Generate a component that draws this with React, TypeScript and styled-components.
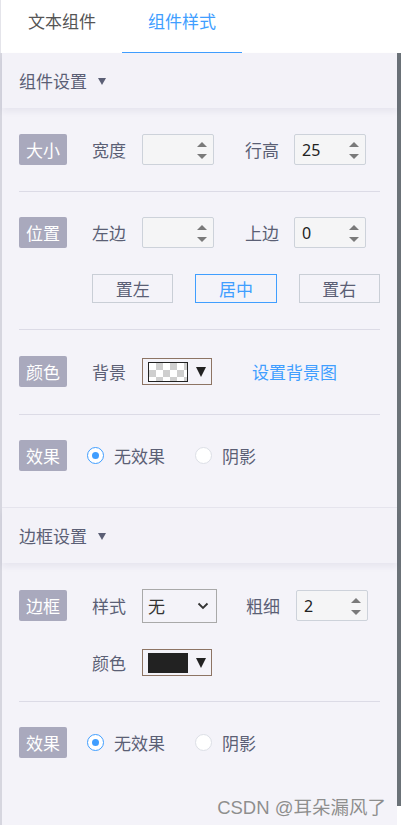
import React from "react";
import styled, { createGlobalStyle, css } from "styled-components";

const Global = createGlobalStyle`
  html, body { margin: 0; padding: 0; background: #ffffff; }
  body { font-family: "Noto Sans CJK SC", "Noto Sans", sans-serif; }
  * { box-sizing: border-box; }
`;

const FONT = `"Noto Sans CJK SC", "Noto Sans", sans-serif`;

const Page = styled.div`
  width: 401px;
  height: 825px;
  position: relative;
  overflow: hidden;
  display: flex;
  flex-direction: column;
  background: #ffffff;
  font-family: ${FONT};
`;

const Tabs = styled.div`
  height: 53px;
  display: flex;
  padding-left: 1px;
  background: #ffffff;
  border-left: 1px solid #e4e4ea;
`;

const Tab = styled.div<{ $active?: boolean }>`
  width: 120px;
  height: 53px;
  display: flex;
  align-items: center;
  justify-content: center;
  font-size: 17px;
  padding-bottom: 12px;
  color: ${(p) => (p.$active ? "#409eff" : "#555555")};
  border-bottom: 1px solid ${(p) => (p.$active ? "#409eff" : "transparent")};
`;

const Body = styled.div`
  flex: 1;
  display: flex;
  min-height: 0;
`;

const Panel = styled.div`
  flex: 1;
  background: #f4f3f9;
  border-left: 2px solid #d6d6df;
  display: flex;
  flex-direction: column;
`;

const Scrollbar = styled.div`
  width: 4px;
  height: 753px;
  background: #6b7278;
`;

const SectionHeader = styled.div`
  height: 55px;
  display: flex;
  align-items: center;
  gap: 11px;
  padding-left: 17px;
  font-size: 17px;
  color: #5b5f75;
  background: #f3f2f8;
  box-shadow: 0 4px 6px rgba(40, 40, 80, 0.06);
  position: relative;
  z-index: 1;
`;

const Caret = styled.span`
  width: 0;
  height: 0;
  border-left: 4px solid transparent;
  border-right: 4px solid transparent;
  border-top: 7px solid #5b5f75;
  margin-top: 1px;
`;

const SectionTop = styled.div`
  border-top: 1px solid #e6e5ee;
`;

const Block = styled.div<{ $last?: boolean; $padTop: number; $padBottom: number; $gap?: number }>`
  margin: 0 17px 0 17px;
  padding: ${(p) => p.$padTop}px 0 ${(p) => p.$padBottom}px;
  display: flex;
  flex-direction: column;
  gap: ${(p) => p.$gap ?? 26}px;
  ${(p) =>
    !p.$last &&
    css`
      border-bottom: 1px solid #dcdbe6;
    `}
`;

const Row = styled.div<{ $indent?: boolean }>`
  display: flex;
  align-items: center;
  height: 31px;
  ${(p) =>
    p.$indent &&
    css`
      padding-left: 73px;
    `}
`;

const Badge = styled.div`
  width: 48px;
  height: 31px;
  border-radius: 2px;
  background: #a9a9bd;
  color: #ffffff;
  font-size: 17px;
  display: flex;
  align-items: center;
  justify-content: center;
  margin-right: 25px;
  flex-shrink: 0;
`;

const Label = styled.div<{ $w?: number }>`
  width: ${(p) => p.$w ?? 50}px;
  font-size: 17px;
  color: #5b5f75;
  flex-shrink: 0;
  white-space: nowrap;
`;

const NumberBox = styled.div<{ $gapAfter?: number }>`
  width: 72px;
  height: 31px;
  background: #f5f5f6;
  border: 1px solid #cdd2da;
  border-radius: 2px;
  display: flex;
  align-items: center;
  padding-left: 7px;
  font-family: "Noto Sans", sans-serif;
  font-size: 16px;
  color: #222222;
  position: relative;
  margin-right: ${(p) => p.$gapAfter ?? 0}px;
  flex-shrink: 0;
`;

const Spinner = styled.div`
  position: absolute;
  right: 6px;
  top: 7px;
  display: flex;
  flex-direction: column;
  gap: 7px;
`;

const Arrow = styled.span<{ $down?: boolean }>`
  width: 0;
  height: 0;
  border-left: 5px solid transparent;
  border-right: 5px solid transparent;
  ${(p) =>
    p.$down
      ? css`
          border-top: 5px solid #7a7a7a;
        `
      : css`
          border-bottom: 5px solid #7a7a7a;
        `}
`;

const ButtonRow = styled.div`
  display: flex;
  gap: 22px;
  padding-left: 73px;
  height: 29px;
`;

const AlignButton = styled.div<{ $active?: boolean }>`
  flex: 1;
  height: 29px;
  display: flex;
  align-items: center;
  justify-content: center;
  font-size: 17px;
  border: 1px solid ${(p) => (p.$active ? "#409eff" : "#c9ced6")};
  color: ${(p) => (p.$active ? "#409eff" : "#5b5f75")};
  background: #f4f3f9;
`;

const Swatch = styled.div`
  width: 70px;
  height: 27px;
  border: 1px solid #8d7464;
  display: flex;
  align-items: center;
  padding-left: 5px;
  gap: 8px;
  flex-shrink: 0;
`;

const Checker = styled.div`
  width: 40px;
  height: 20px;
  border: 1px solid #222;
  background-color: #ffffff;
  background-image: linear-gradient(45deg, #cfcfcf 25%, transparent 25%, transparent 75%, #cfcfcf 75%),
    linear-gradient(45deg, #cfcfcf 25%, transparent 25%, transparent 75%, #cfcfcf 75%);
  background-size: 14px 14px;
  background-position: 0 0, 7px 7px;
`;

const Solid = styled.div<{ $color: string }>`
  width: 40px;
  height: 20px;
  background: ${(p) => p.$color};
`;

const SwatchCaret = styled.span`
  width: 0;
  height: 0;
  border-left: 5px solid transparent;
  border-right: 5px solid transparent;
  border-top: 10px solid #222;
`;

const LinkText = styled.div`
  font-size: 17px;
  color: #409eff;
  margin-left: 40px;
`;

const RadioItem = styled.div`
  display: flex;
  align-items: center;
  gap: 10px;
  margin-right: 30px;
  margin-left: -5px;
  & + & {
    margin-left: 0;
  }
`;

const RadioCircle = styled.span<{ $checked?: boolean }>`
  width: 17px;
  height: 17px;
  border-radius: 50%;
  background: #ffffff;
  border: 1px solid ${(p) => (p.$checked ? "#409eff" : "#dcdfe6")};
  display: flex;
  align-items: center;
  justify-content: center;
  &::after {
    content: "";
    width: 7px;
    height: 7px;
    border-radius: 50%;
    background: ${(p) => (p.$checked ? "#409eff" : "transparent")};
  }
`;

const RadioText = styled.span`
  font-size: 17px;
  color: #5b5f75;
`;

const SelectBox = styled.div`
  width: 75px;
  height: 34px;
  border: 1px solid #a9a9a9;
  display: flex;
  align-items: center;
  justify-content: space-between;
  padding: 0 7px 0 5px;
  font-size: 17px;
  color: #333;
  margin-right: 29px;
  flex-shrink: 0;
`;

const Watermark = styled.div`
  position: absolute;
  right: 15px;
  bottom: 6px;
  font-family: "Liberation Sans", "Noto Sans CJK SC", sans-serif;
  font-size: 18.5px;
  color: #8e8e8e;
  text-shadow: 0 0 1px rgba(255, 255, 255, 0.8);
`;

const NumInput = ({ value, gapAfter }: { value?: string; gapAfter?: number }) => (
  <NumberBox $gapAfter={gapAfter}>
    {value}
    <Spinner>
      <Arrow />
      <Arrow $down />
    </Spinner>
  </NumberBox>
);

const Chevron = () => (
  <svg width="12" height="8" viewBox="0 0 12 8">
    <path d="M1.5 1.5 L6 6 L10.5 1.5" fill="none" stroke="#333" strokeWidth="1.8" />
  </svg>
);

const Effect = () => (
  <Row>
    <Badge>效果</Badge>
    <RadioItem>
      <RadioCircle $checked />
      <RadioText>无效果</RadioText>
    </RadioItem>
    <RadioItem>
      <RadioCircle />
      <RadioText>阴影</RadioText>
    </RadioItem>
  </Row>
);

export default function App() {
  return (
    <Page>
      <Global />
      <Tabs>
        <Tab>文本组件</Tab>
        <Tab $active>组件样式</Tab>
      </Tabs>
      <Body>
        <Panel>
          <SectionHeader>
            组件设置 <Caret />
          </SectionHeader>
          <Block $padTop={26} $padBottom={26}>
            <Row>
              <Badge>大小</Badge>
              <Label>宽度</Label>
              <NumInput gapAfter={31} />
              <Label $w={49}>行高</Label>
              <NumInput value="25" />
            </Row>
          </Block>
          <Block $padTop={25} $padBottom={26}>
            <Row>
              <Badge>位置</Badge>
              <Label>左边</Label>
              <NumInput gapAfter={31} />
              <Label $w={49}>上边</Label>
              <NumInput value="0" />
            </Row>
            <ButtonRow>
              <AlignButton>置左</AlignButton>
              <AlignButton $active>居中</AlignButton>
              <AlignButton>置右</AlignButton>
            </ButtonRow>
          </Block>
          <Block $padTop={26} $padBottom={27}>
            <Row>
              <Badge>颜色</Badge>
              <Label>背景</Label>
              <Swatch>
                <Checker />
                <SwatchCaret />
              </Swatch>
              <LinkText>设置背景图</LinkText>
            </Row>
          </Block>
          <Block $last $padTop={25} $padBottom={36}>
            <Effect />
          </Block>
          <SectionTop />
          <SectionHeader>
            边框设置 <Caret />
          </SectionHeader>
          <Block $padTop={27} $padBottom={23} $gap={26}>
            <Row>
              <Badge>边框</Badge>
              <Label>样式</Label>
              <SelectBox>
                无 <Chevron />
              </SelectBox>
              <Label $w={50}>粗细</Label>
              <NumInput value="2" />
            </Row>
            <Row $indent>
              <Label>颜色</Label>
              <Swatch>
                <Solid $color="#222222" />
                <SwatchCaret />
              </Swatch>
            </Row>
          </Block>
          <Block $last $padTop={25} $padBottom={0}>
            <Effect />
          </Block>
        </Panel>
        <Scrollbar />
      </Body>
      <Watermark>CSDN @耳朵漏风了</Watermark>
    </Page>
  );
}
